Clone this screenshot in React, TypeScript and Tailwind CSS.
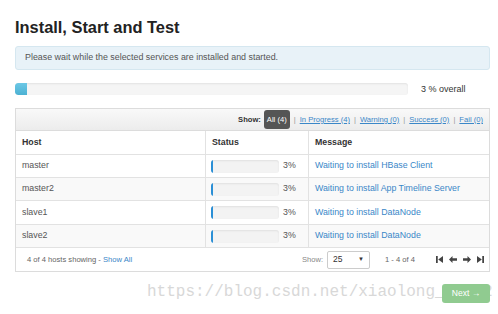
import React from "react";

const hosts = [
  { name: "master", msg: "Waiting to install HBase Client", h: "h-[23px]" },
  { name: "master2", msg: "Waiting to install App Timeline Server", h: "h-[23px]" },
  { name: "slave1", msg: "Waiting to install DataNode", h: "h-[24px]" },
  { name: "slave2", msg: "Waiting to install DataNode", h: "h-[23px]" },
];

const filters = ["In Progress (4)", "Warning (0)", "Success (0)", "Fail (0)"];

function StepIcon({ flip }: { flip?: boolean }) {
  return (
    <svg width="7" height="7" viewBox="0 0 8 8" className={flip ? "rotate-180" : ""}>
      <rect x="0" y="0" width="2" height="8" fill="#444" />
      <path d="M8 0 L2.5 4 L8 8 Z" fill="#444" />
    </svg>
  );
}

function ArrowIcon({ flip }: { flip?: boolean }) {
  return (
    <svg width="8" height="7" viewBox="0 0 8 7" className={flip ? "rotate-180" : ""}>
      <path d="M0 3.5 L3.5 0 L3.5 2.3 L8 2.3 L8 4.7 L3.5 4.7 L3.5 7 Z" fill="#444" />
    </svg>
  );
}

export default function App() {
  return (
    <div
      className="relative w-[498px] h-[314px] overflow-hidden bg-white pl-[15px] pr-[8px] text-[#333]"
      style={{ fontFamily: "'Liberation Sans', Arial, sans-serif" }}
    >
      <h1 className="mt-[16px] h-[23px] text-[16.4px] leading-[23px] font-bold text-[#222]">
        Install, Start and Test
      </h1>

      <div className="mt-[7px] h-[24px] rounded-[3px] border border-[#d5e7f0] bg-[#e8f2f8] px-[9px] flex items-center text-[8.9px] text-[#555]">
        Please wait while the selected services are installed and started.
      </div>

      <div className="mt-[13px] h-[12px] flex items-center">
        <div className="h-[12px] w-[393px] rounded-[3px] bg-[#f5f5f5] shadow-[inset_0_1px_2px_rgba(0,0,0,0.08)] overflow-hidden">
          <div className="h-full w-[12px] rounded-l-[3px] bg-gradient-to-b from-[#6cc8e6] to-[#4bb1d3]" />
        </div>
        <span className="ml-[13px] text-[9px] leading-[12px]">3 % overall</span>
      </div>

      <div className="relative z-10 mt-[13px] border border-[#dcdcdc] bg-white">
        <div className="h-[22px] flex items-center justify-end pr-[6px] border-b border-[#dcdcdc] bg-gradient-to-b from-[#f9f9f9] to-[#ececec] text-[7.6px]">
          <span className="font-bold mr-[3px]">Show:</span>
          <span className="rounded-[3px] bg-[#555] px-[3px] py-[4px] text-white">All (4)</span>
          {filters.map((f) => (
            <React.Fragment key={f}>
              <span className="mx-[4px] text-[#999]">|</span>
              <span className="text-[#3a87c8] underline">{f}</span>
            </React.Fragment>
          ))}
        </div>
        <div className="flex h-[24px] items-center text-[8.8px] font-bold border-b border-[#e2e2e2]">
          <div className="w-[190px] h-full flex items-center px-[6px] border-r border-[#e2e2e2]">Host</div>
          <div className="w-[103px] h-full flex items-center px-[6px] border-r border-[#e2e2e2]">Status</div>
          <div className="flex-1 px-[6px]">Message</div>
        </div>
        {hosts.map((h, i) => (
          <div
            key={h.name}
            className={`flex ${h.h} items-center text-[8.8px] border-b border-[#e2e2e2] ${i % 2 === 1 ? "bg-[#f9f9f9]" : "bg-white"}`}
          >
            <div className="w-[190px] h-full flex items-center px-[6px] border-r border-[#e2e2e2] text-[#555]">{h.name}</div>
            <div className="w-[103px] h-full flex items-center px-[5px] border-r border-[#e2e2e2]">
              <div className="h-[13px] w-[68px] rounded-[3px] bg-[#f3f3f3] shadow-[inset_0_1px_2px_rgba(0,0,0,0.08)] overflow-hidden">
                <div className="h-full w-[2px] bg-[#2a8fd6]" />
              </div>
              <span className="ml-[4px] text-[#555]">3%</span>
            </div>
            <div className="flex-1 px-[6px] text-[#3a87c8] whitespace-nowrap">{h.msg}</div>
          </div>
        ))}
        <div className="flex h-[23px] items-center text-[7.6px] text-[#666]">
          <div className="pl-[11px]">
            4 of 4 hosts showing - <span className="text-[#3a87c8]">Show All</span>
          </div>
          <div className="ml-auto flex items-center">
            <span className="text-[#888]">Show:</span>
            <div className="ml-[4px] h-[18px] w-[43px] rounded-[2px] border border-[#ccc] flex items-center justify-between px-[5px] text-[#333] text-[8.5px]">
              <span>25</span>
              <span className="text-[6px]">▼</span>
            </div>
            <span className="ml-[15px] text-[#666]">1 - 4 of 4</span>
            <div className="ml-[21px] mr-[5px] flex items-center gap-[6px]">
              <StepIcon />
              <ArrowIcon />
              <ArrowIcon flip />
              <StepIcon flip />
            </div>
          </div>
        </div>
      </div>

      <div
        className="absolute left-[147px] top-[281px] text-[16px] leading-[22px] text-[#d8d8d8] whitespace-nowrap"
        style={{ fontFamily: "'Liberation Mono', monospace" }}
      >
        https://blog.csdn.net/xiaolong_yang2
      </div>

      <div className="relative z-10 mt-[12px] flex justify-end">
        <div className="h-[19px] w-[48px] rounded-[3px] bg-[#90cb90] flex items-center justify-center text-[8.5px] text-white">
          Next →
        </div>
      </div>
    </div>
  );
}
